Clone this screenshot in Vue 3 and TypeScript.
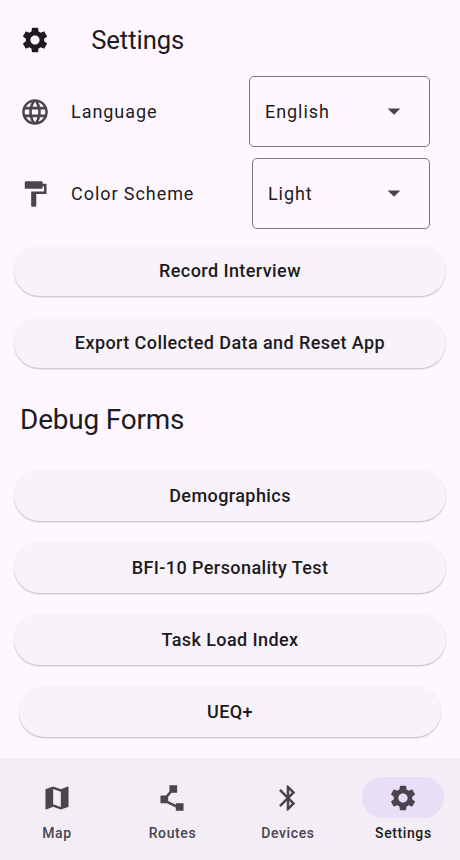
<script setup lang="ts">
import { ref } from 'vue'

interface NavItem {
  label: string
  icon: string
}

const iconBox = '0.3 0.3 23.4 23.4'

const icons = {
  settings:
    'M19.14 12.94c.04-.3.06-.61.06-.94 0-.32-.02-.64-.07-.94l2.03-1.58c.18-.14.23-.41.12-.61l-1.92-3.32c-.12-.22-.37-.29-.59-.22l-2.39.96c-.5-.38-1.03-.7-1.62-.94l-.36-2.54c-.04-.24-.24-.41-.48-.41h-3.84c-.24 0-.43.17-.47.41l-.36 2.54c-.59.24-1.13.57-1.62.94l-2.39-.96c-.22-.08-.47 0-.59.22L2.74 8.87c-.12.21-.08.47.12.61l2.03 1.58c-.05.3-.09.63-.09.94s.02.64.07.94l-2.03 1.58c-.18.14-.23.41-.12.61l1.92 3.32c.12.22.37.29.59.22l2.39-.96c.5.38 1.03.7 1.62.94l.36 2.54c.05.24.24.41.48.41h3.84c.24 0 .44-.17.47-.41l.36-2.54c.59-.24 1.13-.56 1.62-.94l2.39.96c.22.08.47 0 .59-.22l1.92-3.32c.12-.22.07-.47-.12-.61l-2.01-1.58zM12 15.6c-1.98 0-3.6-1.62-3.6-3.6s1.62-3.6 3.6-3.6 3.6 1.62 3.6 3.6-1.62 3.6-3.6 3.6z',
  language:
    'M11.99 2C6.47 2 2 6.48 2 12s4.47 10 9.99 10C17.52 22 22 17.52 22 12S17.52 2 11.99 2zm6.93 6h-2.95c-.32-1.25-.78-2.45-1.38-3.56 1.84.63 3.37 1.91 4.33 3.56zM12 4.04c.83 1.2 1.48 2.53 1.91 3.96h-3.82c.43-1.43 1.08-2.76 1.91-3.96zM4.26 14C4.1 13.36 4 12.69 4 12s.1-1.36.26-2h3.38c-.08.66-.14 1.32-.14 2 0 .68.06 1.34.14 2H4.26zm.82 2h2.95c.32 1.25.78 2.45 1.38 3.56-1.84-.63-3.37-1.9-4.33-3.56zm2.95-8H5.08c.96-1.66 2.49-2.93 4.33-3.56C8.81 5.55 8.35 6.75 8.03 8zM12 19.96c-.83-1.2-1.48-2.53-1.91-3.96h3.82c-.43 1.43-1.08 2.76-1.91 3.96zM14.34 14H9.66c-.09-.66-.16-1.32-.16-2 0-.68.07-1.35.16-2h4.68c.09.65.16 1.32.16 2 0 .68-.07 1.34-.16 2zm.25 5.56c.6-1.11 1.06-2.31 1.38-3.56h2.95c-.96 1.65-2.49 2.93-4.33 3.56zM16.36 14c.08-.66.14-1.32.14-2 0-.68-.06-1.34-.14-2h3.38c.16.64.26 1.31.26 2s-.1 1.36-.26 2h-3.38z',
  paint:
    'M18 4V3c0-.55-.45-1-1-1H5c-.55 0-1 .45-1 1v4c0 .55.45 1 1 1h12c.55 0 1-.45 1-1V6h1v4H9v11c0 .55.45 1 1 1h2c.55 0 1-.45 1-1v-9h8V4h-3z',
  map: 'M20.5 3l-.16.03L15 5.1 9 3 3.36 4.9c-.21.07-.36.25-.36.48V20.5c0 .28.22.5.5.5l.16-.03L9 18.9l6 2.1 5.64-1.9c.21-.07.36-.25.36-.48V3.5c0-.28-.22-.5-.5-.5zM15 19l-6-2.11V5l6 2.11V19z',
  routes: 'M15 16v1.26l-6-3v-3.17L11.7 8H16V2h-6v4.9L7.3 10H3v6h5l7 3.5V22h6v-6z',
  bluetooth:
    'M17.71 7.71L12 2h-1v7.59L6.41 5 5 6.41 10.59 12 5 17.59 6.41 19 11 14.41V22h1l5.71-5.71-4.3-4.29 4.3-4.29zM13 5.83l1.88 1.88L13 9.59V5.83zm1.88 10.46L13 18.17v-3.76l1.88 1.88z',
  dropdown: 'M7 10l5 5 5-5z',
}

const actions = ['Record Interview', 'Export Collected Data and Reset App']
const forms = ['Demographics', 'BFI-10 Personality Test', 'Task Load Index', 'UEQ+']

const navItems: NavItem[] = [
  { label: 'Map', icon: icons.map },
  { label: 'Routes', icon: icons.routes },
  { label: 'Devices', icon: icons.bluetooth },
  { label: 'Settings', icon: icons.settings },
]
const active = ref('Settings')
</script>

<template>
  <div class="screen">
    <main class="content">
      <header class="header">
        <svg class="icon" :viewBox="iconBox"><path :d="icons.settings" /></svg>
        <h1 class="title">Settings</h1>
      </header>

      <section class="row">
        <svg class="icon muted" :viewBox="iconBox"><path :d="icons.language" /></svg>
        <span class="label">Language</span>
        <button class="select language">
          <span>English</span>
          <svg class="icon muted" :viewBox="iconBox"><path :d="icons.dropdown" /></svg>
        </button>
      </section>
      <section class="row">
        <svg class="icon muted" :viewBox="iconBox"><path :d="icons.paint" /></svg>
        <span class="label">Color Scheme</span>
        <button class="select scheme">
          <span>Light</span>
          <svg class="icon muted" :viewBox="iconBox"><path :d="icons.dropdown" /></svg>
        </button>
      </section>

      <div class="buttons actions">
        <button v-for="action in actions" :key="action" class="pill">{{ action }}</button>
      </div>

      <h2 class="subtitle">Debug Forms</h2>

      <div class="buttons forms">
        <button v-for="form in forms" :key="form" class="pill">{{ form }}</button>
      </div>
    </main>

    <nav class="nav">
      <button
        v-for="item in navItems"
        :key="item.label"
        class="nav-item"
        :class="{ active: item.label === active }"
        @click="active = item.label"
      >
        <span class="indicator">
          <svg class="icon" :viewBox="iconBox"><path :d="item.icon" /></svg>
        </span>
        <span class="nav-label">{{ item.label }}</span>
      </button>
    </nav>
  </div>
</template>

<style>
body {
  margin: 0;
  background: #fef7ff;
}
</style>

<style scoped>
.screen {
  display: flex;
  flex-direction: column;
  width: 460px;
  height: 860px;
  overflow: hidden;
  background: #fef7ff;
  color: #1d1b20;
  font-family: Roboto, sans-serif;
}
button {
  box-sizing: border-box;
  margin: 0;
  padding: 0;
  border: 0;
  background: none;
  color: inherit;
  font: inherit;
  letter-spacing: inherit;
}
.content {
  flex: 1;
  min-height: 0;
}
.icon {
  display: block;
  flex: none;
  width: 30px;
  height: 30px;
  fill: currentColor;
}
.muted {
  color: #49454f;
}
.header {
  display: flex;
  align-items: center;
  gap: 41.2px;
  height: 70.5px;
  padding: 8.5px 0 0 20px;
  box-sizing: border-box;
}
.title,
.subtitle {
  margin: 0;
  font-weight: 400;
}
.title {
  font-size: 25.6px;
  line-height: 34px;
  letter-spacing: -0.05px;
}
.row {
  display: flex;
  align-items: center;
  height: 82px;
  padding: 0 30px 0 20px;
  font-size: 18px;
  letter-spacing: 0.93px;
}
.label {
  flex: 1;
  margin-left: 21.1px;
}
.select {
  display: flex;
  align-items: center;
  justify-content: space-between;
  height: 71.4px;
  padding: 0 19.7px 0 15px;
  border: 1.3px solid #79747e;
  border-radius: 5px;
}
.language {
  width: 181px;
}
.scheme {
  width: 178px;
}
.buttons {
  display: flex;
  flex-direction: column;
  gap: 20.5px;
  padding: 0 14px;
}
.actions {
  padding-top: 10.5px;
}
.pill {
  height: 51.3px;
  border-radius: 26px;
  background: #f8f3fb;
  box-shadow: 0 1.2px 1.3px rgba(0, 0, 0, 0.22), 0 0 1px rgba(0, 0, 0, 0.03);
  font-size: 18px;
  font-weight: 500;
  letter-spacing: 0.42px;
}
.forms .pill:last-child {
  margin: 0 5px;
}
.subtitle {
  height: 102.1px;
  padding-left: 20px;
  font-size: 27.9px;
  line-height: 104px;
  letter-spacing: -0.17px;
}
.nav {
  display: flex;
  justify-content: space-between;
  height: 102.4px;
  padding: 19.4px 15.6px 0 16px;
  box-sizing: border-box;
  background: #f3eef6;
}
.nav-item {
  display: flex;
  flex-direction: column;
  align-items: center;
  gap: 4.6px;
  width: 82px;
  color: #49454f;
}
.indicator {
  display: flex;
  align-items: center;
  justify-content: center;
  width: 82px;
  height: 41px;
  border-radius: 21px;
}
.active .indicator {
  background: #e7dff8;
}
.nav-label {
  font-size: 14px;
  font-weight: 500;
  line-height: 20px;
  letter-spacing: 0.6px;
}
.active .nav-label {
  color: #1d1b20;
}
</style>
